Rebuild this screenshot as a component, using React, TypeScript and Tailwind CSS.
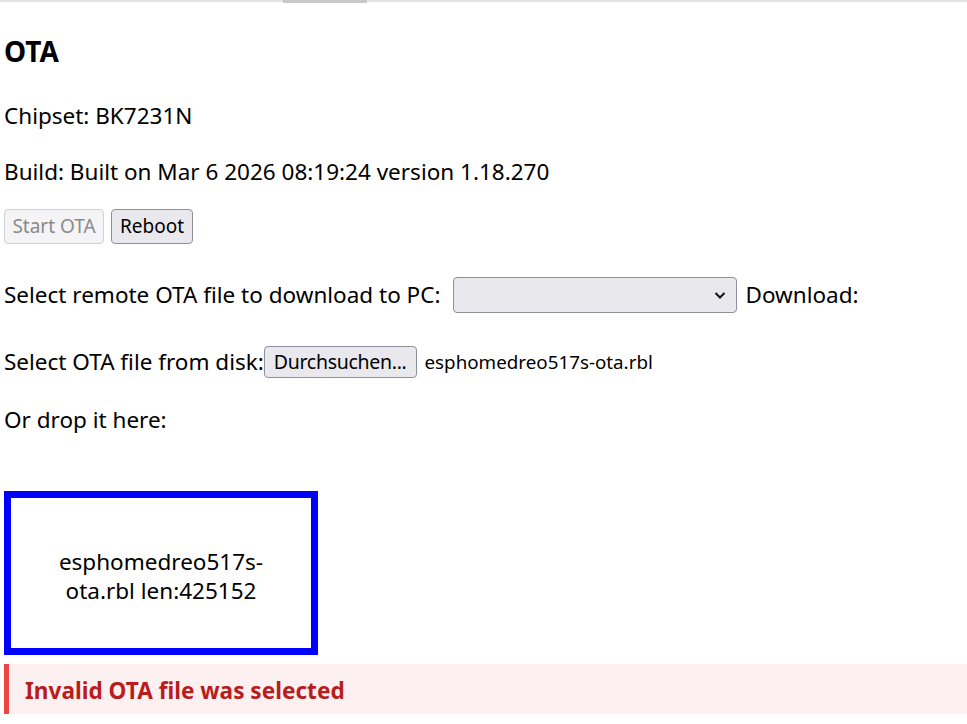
import React from "react";

export default function App() {
  return (
    <div className="min-h-screen bg-white text-black font-['Noto_Sans',sans-serif] text-[22.5px]">
      <div className="h-[2px] bg-[#e3e3e3] relative">
        <div className="absolute left-[283px] top-0 w-[84px] h-[3px] bg-[#c8c8c8]" />
      </div>

      <div className="pl-[4px]">
        <h2 className="mt-[31px] text-[28px] font-bold leading-[36px]">OTA</h2>

        <p className="mt-[33px] leading-[28px]">Chipset: BK7231N</p>
        <p className="mt-[28px] leading-[28px]">Build: Built on Mar 6 2026 08:19:24 version 1.18.270</p>

        <div className="mt-[23px] flex gap-[7px]">
          <button
            disabled
            className="h-[35px] w-[100px] rounded-[4px] border border-[#d0d0d6] bg-[#f4f4f6] text-[#8a8a8a] text-[19px]"
          >
            Start OTA
          </button>
          <button className="h-[35px] w-[82px] rounded-[4px] border border-[#8f8f9d] bg-[#e9e9ed] text-[19px]">
            Reboot
          </button>
        </div>

        <div className="mt-[33px] flex items-center leading-[28px]">
          <span>Select remote OTA file to download to PC:</span>
          <div className="ml-[13px] relative h-[36px] w-[284px] rounded-[4px] border border-[#8f8f9d] bg-[#e9e9ed]">
            <svg
              className="absolute right-[10px] top-[13px]"
              width="12"
              height="9"
              viewBox="0 0 12 9"
              fill="none"
              stroke="#111"
              strokeWidth="2"
            >
              <path d="M1.5 2l4.5 4.5 4.5-4.5" />
            </svg>
          </div>
          <span className="ml-[8px]">Download:</span>
        </div>

        <div className="mt-[33px] flex items-center leading-[28px]">
          <span>Select OTA file from disk:</span>
          <button className="h-[32px] px-[9px] rounded-[4px] border border-[#8f8f9d] bg-[#e9e9ed] text-[19.5px] tracking-[-0.3px]">
            Durchsuchen...
          </button>
          <span className="ml-[8px] text-[18.8px]">esphomedreo517s-ota.rbl</span>
        </div>

        <p className="mt-[28px] leading-[28px]">Or drop it here:</p>

        <div className="mt-[57px] w-[314px] h-[164px] border-[7px] border-[#0000ff] flex items-center justify-center text-center leading-[29px] px-[30px] pt-[6px]">
          esphomedreo517s-ota.rbl len:425152
        </div>

        <div className="mt-[9px] h-[50px] border-l-[5px] border-[#ef4444] bg-[#fdf0f0] flex items-center pl-[16px] pt-[4px]">
          <span className="font-bold text-[#b91c1c] text-[22.6px]">Invalid OTA file was selected</span>
        </div>
      </div>
    </div>
  );
}
